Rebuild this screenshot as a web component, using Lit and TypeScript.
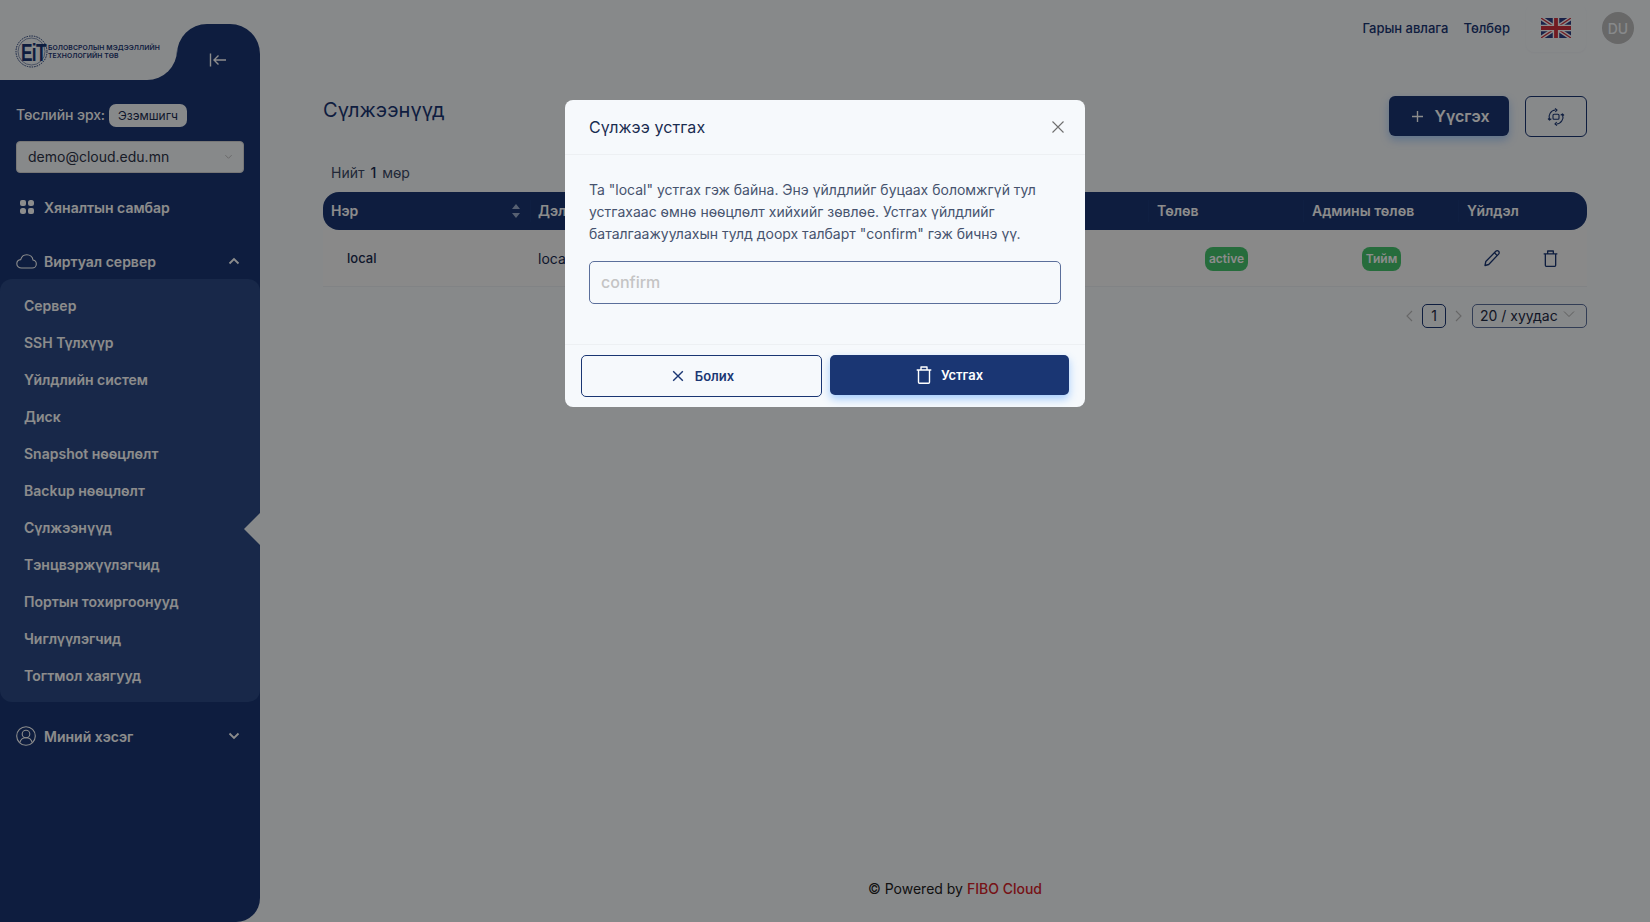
import { LitElement, html, css } from "lit";
import { customElement } from "lit/decorators.js";

const x = (size: number, w = 1.6) => html`<svg width=${size} height=${size} viewBox="0 0 16 16" fill="none" stroke="currentColor" stroke-width=${w}><path d="M2.5 2.500l11 11M13.500 2.500l-11 11"/></svg>`;
const trash = (w: number, h: number) => html`<svg width=${w} height=${h} viewBox="0 0 16 18" fill="none" stroke="currentColor" stroke-width="1.4" stroke-linejoin="round"><path d="M.7 4h14.600M5 4V1h6v3M2.500 4v12.200c0 .6.4 1.100 1 1.100h9c.6 0 1-.5 1-1.100V4"/></svg>`;

const items = ["Сервер", "SSH Түлхүүр", "Үйлдлийн систем", "Диск", "Snapshot нөөцлөлт", "Backup нөөцлөлт", "Сүлжээнүүд", "Тэнцвэржүүлэгчид", "Портын тохиргоонууд", "Чиглүүлэгчид", "Тогтмол хаягууд"];

@customElement("app-root")
export class AppRoot extends LitElement {
  static styles = css`
    :host { display: block; font-family: Inter, "Noto Sans", sans-serif; color: #1a3673; }
    * { box-sizing: border-box; }
    .page { position: relative; display: flex; height: 922px; overflow: hidden; background: #f6f9fc; }
    .side { width: 260px; flex: none; display: flex; flex-direction: column; }
    .top { display: flex; height: 80px; flex: none; }
    .brandwrap { width: 177px; background: linear-gradient(to bottom, transparent 50px, #1a3673 50px); }
    .brand { height: 80px; background: #f6f9fc; border-bottom-right-radius: 30px; display: flex; align-items: center; gap: 0; padding: 22px 0 0 15px; }
    .logo { position: relative; width: 33px; height: 33px; flex: none; }
    .logo svg { display: block; }
    .logo span { position: absolute; left: 6px; top: 1px; font: 800 24px/33px "Liberation Sans", sans-serif; letter-spacing: -1px; color: #1a3673; transform: scaleX(.72); transform-origin: left center; }
    .brandtext { font: 600 6.800px/8px Inter, sans-serif; color: #1a3673; white-space: nowrap; letter-spacing: .1px; padding-top: 2px; }
    .tab { width: 83px; margin-top: 24px; background: #1a3673; border-radius: 30px 30px 0 0; color: #fff; display: flex; align-items: center; justify-content: center; padding: 16px 2px 0 0; }
    .sbody { flex: 1; background: #1a3673; border-bottom-right-radius: 24px; color: #fff; display: flex; flex-direction: column; }
    .role { display: flex; align-items: center; gap: 4px; padding: 22px 16px 0; font-size: 14px; font-weight: 500; height: 46px; letter-spacing: -.1px; }
    .badge { background: #f6f9fc; color: #1a2c50; font-size: 12px; font-weight: 400; line-height: 23px; height: 23px; padding: 0 9px; border-radius: 7px; letter-spacing: 0; margin: 2px 0 0; }
    .sel { margin: 15px 16px 0; height: 32px; background: #f6f9fc; border-radius: 4px; border: 1px solid #d9d9d9; color: #2c3347; font-size: 14px; padding: 0 11px 2px; display: flex; align-items: center; justify-content: space-between; }
    .sel svg { color: #bbb; margin-right: -1px; }
    .nav { display: flex; align-items: center; font-size: 14px; font-weight: 600; color: #fff; padding-left: 16px; padding-right: 20px; height: 24px; }
    .nav .ic { width: 28px; display: flex; flex: none; }
    .nav .ch { margin-left: auto; }
    .n1 { margin-top: 22px; }
    .n2 { margin-top: 30px; }
    .n3 { margin-top: 22px; }
    .sub { margin-top: 6px; height: 423px; background: #2c4a85; border-radius: 12px; display: flex; flex-direction: column; padding: 8px 0 0 24px; position: relative; }
    .sub div { height: 37px; line-height: 37px; font-size: 14px; font-weight: 600; color: #fff; }
    .notch { position: absolute; right: 0; top: 234px; width: 0; height: 0; border-style: solid; border-width: 16px 16px 16px 0; border-color: transparent #f6f9fc transparent transparent; }
    .main { flex: 1; display: flex; flex-direction: column; min-width: 0; padding: 0 63px; position: relative; }
    .hdr { height: 56px; display: flex; align-items: center; justify-content: flex-end; font-size: 13px; font-weight: 500; color: #1a3673; margin-right: -63px; padding-right: 16px; }
    .hdr .l1 { margin-right: 15px; }
    .flagbox { width: 60px; margin: 0 16px 0 16px; display: flex; justify-content: center; height: 48px; align-items: center; border-radius: 8px; box-shadow: 0 1px 2px rgba(0,0,0,.03); }
    .avatar { width: 32px; height: 32px; border-radius: 50%; background: #bdbdbd; color: #f6f9fc; font-size: 14px; display: flex; align-items: center; justify-content: center; }
    .titlerow { display: flex; align-items: flex-start; margin-top: 40px; height: 41px; }
    h1 { margin: 0; flex: 1; font-size: 20px; font-weight: 400; line-height: 28px; color: #1a3673; letter-spacing: .05px; }
    .create { width: 120px; height: 40px; background: #1a3673; color: #fff; border-radius: 6px; display: flex; align-items: center; justify-content: center; gap: 11px; padding-left: 4px; font-size: 16px; font-weight: 600; box-shadow: 0 4px 8px rgba(64,150,255,.4); }
    .refresh { width: 62px; height: 41px; margin-left: 16px; border: 1px solid #1a3673; border-radius: 6px; display: flex; align-items: center; justify-content: center; color: #1a3673; }
    .total { margin: 26px 0 0 8px; height: 29px; font-size: 14px; line-height: 20px; color: #3c4a66; }
    .total b { font-weight: 500; color: #1a2c50; margin: 0 2px; }
    .grid { display: grid; grid-template-columns: 207px 618px 155px 155px 129px; }
    .thead { height: 38px; background: #1a3673; border-radius: 16px; color: #fff; font-size: 14px; font-weight: 600; align-items: center; }
    .thead > div { height: 22px; line-height: 22px; padding-left: 8px; border-left: 1px solid #1c3a78; display: flex; align-items: center; justify-content: space-between; }
    .thead > div:first-child { border-left: 0; padding-right: 9px; }
    .thead > div:nth-child(2) { padding-left: 7px; }
    .trow { height: 57px; background: #fafafa; border-bottom: 1px solid #ebeef3; align-items: center; font-size: 13px; color: #1a2c50; }
    .trow .nm { padding-left: 24px; font-weight: 500; }
    .trow .dt { padding-left: 8px; font-size: 14px; }
    .center { display: flex; justify-content: center; padding: 1px 0 0 2px; }
    .pill { background: #45c56e; color: #fff; font-size: 12px; font-weight: 600; line-height: 24px; height: 24px; padding: 0 4px; border-radius: 8px; }
    .acts { display: flex; color: #1a3673; padding-left: 25px; gap: 42px; align-items: center; }
    .pager { display: flex; justify-content: flex-end; align-items: center; margin-top: 17px; font-size: 14px; color: #1f2a44; height: 24px; }
    .pg { width: 24px; height: 24px; border: 1px solid #1a3673; border-radius: 5px; text-align: center; line-height: 22px; margin: 0 8px; }
    .arrow { color: #bbb; display: flex; }
    .size { margin-left: 9px; width: 115px; height: 24px; border: 1px solid #5b6f9b; border-radius: 5px; padding: 0 11px 2px 7px; display: flex; align-items: center; justify-content: space-between; }
    .size svg { color: #aaa; margin-bottom: 2px; }
    .foot { margin-top: auto; padding-bottom: 23px; text-align: center; font-size: 14px; line-height: 20px; color: #222; }
    .foot span { color: #d8232a; font-weight: 500; }
    .overlay { position: absolute; inset: 0; background: rgba(0,0,0,.45); }
    .modal { position: absolute; left: 565px; top: 100px; width: 520px; height: 307px; background: #f6f9fc; border-radius: 8px; display: flex; flex-direction: column; color: #1a2c50; }
    .mh { height: 55px; flex: none; display: flex; align-items: center; justify-content: space-between; padding: 0 19px 0 24px; border-bottom: 1px solid #edf0f3; font-size: 16px; font-weight: 400; color: #1a2c50; letter-spacing: .1px; }
    .mh svg { color: #6f6f6f; }
    .mb { flex: 1; padding: 24px 24px 0; font-size: 14px; line-height: 22px; color: #46536e; }
    .mb p { margin: 0; white-space: nowrap; }
    .inp { margin-top: 16px; height: 43px; border: 1px solid #5b6f9b; border-radius: 5px; padding: 0 11px; line-height: 41px; font-size: 16px; font-weight: 500; color: #c4c4c4; }
    .mf { height: 63px; flex: none; border-top: 1px solid #edf0f3; display: flex; padding: 10px 16px 0; gap: 8px; align-items: flex-start; }
    .btn { display: flex; align-items: center; justify-content: center; font-size: 13px; border-radius: 5px; font-weight: 600; }
    .cancel { width: 241px; height: 42px; border: 1px solid #1a3673; color: #1a3673; gap: 10px; padding-left: 2px; }
    .del { width: 239px; height: 40px; background: #1a3673; color: #fff; gap: 9px; padding-bottom: 1px; box-shadow: 0 4px 8px rgba(64,150,255,.45); }
  `;

  render() {
    return html`
      <div class="page">
        <aside class="side">
          <div class="top">
            <div class="brandwrap"><div class="brand">
              <div class="logo">
                <svg width="33" height="33" viewBox="0 0 33 33" fill="none" stroke="#1a3673"><circle cx="16.500" cy="16.500" r="15.500" stroke-dasharray="1.500 1" stroke-width="1"/><circle cx="16.500" cy="16.500" r="13.500" stroke-width=".5"/></svg>
                <span>EiT</span>
              </div>
              <div class="brandtext">БОЛОВСРОЛЫН МЭДЭЭЛЛИЙН<br/>ТЕХНОЛОГИЙН ТӨВ</div>
            </div></div>
            <div class="tab">
              <svg width="18" height="14" viewBox="0 0 18 14" fill="none" stroke="currentColor" stroke-width="1.400"><path d="M1.500 .5v13M17 7H5M9.500 2.500L5 7l4.500 4.500"/></svg>
            </div>
          </div>
          <div class="sbody">
            <div class="role">Төслийн эрх: <span class="badge">Эзэмшигч</span></div>
            <div class="sel">demo@cloud.edu.mn
              <svg width="9" height="9" viewBox="0 0 10 10" fill="none" stroke="currentColor" stroke-width="1"><path d="M1.500 3.500L5 7l3.500-3.500"/></svg>
            </div>
            <div class="nav n1"><span class="ic">
              <svg width="16" height="16" viewBox="0 0 16 16" fill="currentColor" style="margin-left:3px"><rect x="1" y="1" width="6" height="6" rx="2"/><rect x="9" y="1" width="6" height="6" rx="2.500"/><rect x="1" y="9" width="6" height="6" rx="2.500"/><rect x="9" y="9" width="6" height="6" rx="2"/></svg>
            </span>Хяналтын самбар</div>
            <div class="nav n2"><span class="ic">
              <svg width="21" height="15" viewBox="0 0 21 15" fill="none" stroke="currentColor" stroke-width="1.100"><path d="M5.500 14C3 14 .8 12.300.8 9.800c0-2.200 1.700-4 3.900-4.200C5.500 2.800 7.900.8 10.800.8c3.200 0 5.800 2.200 6.200 5.200 1.900.3 3.300 1.900 3.300 3.900 0 2.300-1.800 4.100-4.100 4.100z"/></svg>
            </span>Виртуал сервер
              <svg class="ch" width="12" height="8" viewBox="0 0 12 8" fill="none" stroke="currentColor" stroke-width="1.800"><path d="M1.500 6.500L6 2l4.500 4.500"/></svg>
            </div>
            <div class="sub">
              ${items.map((i) => html`<div>${i}</div>`)}
              <span class="notch"></span>
            </div>
            <div class="nav n3"><span class="ic">
              <svg width="20" height="20" viewBox="0 0 20 20" fill="none" stroke="currentColor" stroke-width="1.100"><circle cx="10" cy="10" r="9.300"/><circle cx="10" cy="8" r="3.800"/><path d="M3.800 16.500c.8-3 3.200-4.800 6.200-4.800s5.400 1.800 6.200 4.800"/></svg>
            </span>Миний хэсэг
              <svg class="ch" width="12" height="8" viewBox="0 0 12 8" fill="none" stroke="currentColor" stroke-width="1.800"><path d="M1.500 1.500L6 6l4.500-4.500"/></svg>
            </div>
          </div>
        </aside>
        <main class="main">
          <div class="hdr">
            <span class="l1">Гарын авлага</span><span>Төлбөр</span>
            <div class="flagbox">
              <svg width="30" height="20" viewBox="0 0 30 20">
                <rect width="30" height="20" fill="#2f3f86"/>
                <path d="M0 0L30 20M30 0L0 20" stroke="#fff" stroke-width="4"/>
                <path d="M0 0L30 20M30 0L0 20" stroke="#d0323f" stroke-width="1.300"/>
                <path d="M15 0V20M0 10H30" stroke="#fff" stroke-width="6.500"/>
                <path d="M15 0V20M0 10H30" stroke="#d0323f" stroke-width="3.800"/>
              </svg>
            </div>
            <div class="avatar">DU</div>
          </div>
          <div class="titlerow">
            <h1>Сүлжээнүүд</h1>
            <div class="create">
              <svg width="11" height="11" viewBox="0 0 12 12" stroke="currentColor" stroke-width="1.500"><path d="M6 0v12M0 6h12"/></svg>
              Үүсгэх
            </div>
            <div class="refresh">
              <svg width="18" height="18" viewBox="0 0 18 18" fill="none" stroke="currentColor" stroke-width="1.100"><rect x="6" y="6.300" width="6" height="5" rx="1"/><path d="M2.500 11.500a7 7 0 0 1 6-9.500M15.500 6.500a7 7 0 0 1-6 9.500"/><path d="M8 .5l2 1.600L8.300 4M10 17.500L8 15.900l1.700-1.900"/><path d="M1 10.500l1.500 1.500 1.800-1.300M17 7.500l-1.500-1.500-1.800 1.300"/></svg>
            </div>
          </div>
          <div class="total">Нийт <b>1</b> мөр</div>
          <div class="grid thead">
            <div>Нэр
              <svg width="10" height="18" viewBox="0 0 10 18" fill="#9fb0d0"><path d="M5 2l4 5H1zM5 16L1 11h8z"/></svg>
            </div>
            <div>Дэл</div>
            <div>Төлөв</div>
            <div>Админы төлөв</div>
            <div>Үйлдэл</div>
          </div>
          <div class="grid trow">
            <div class="nm">local</div>
            <div class="dt">local</div>
            <div class="center"><span class="pill">active</span></div>
            <div class="center"><span class="pill">Тийм</span></div>
            <div class="acts">
              <svg width="18" height="18" viewBox="0 0 18 18" fill="none" stroke="currentColor" stroke-width="1.300" stroke-linejoin="round"><path d="M2 16.500l.8-4L12.800 2.300c.8-.8 2-.8 2.800 0s.8 2 0 2.800L5.700 15.500z"/><path d="M11.500 3.800l2.800 2.800"/></svg>
              ${trash(15, 17)}
            </div>
          </div>
          <div class="pager">
            <span class="arrow"><svg width="9" height="12" viewBox="0 0 9 12" fill="none" stroke="currentColor" stroke-width="1.100"><path d="M7 1L2 6l5 5"/></svg></span>
            <span class="pg">1</span>
            <span class="arrow"><svg width="9" height="12" viewBox="0 0 9 12" fill="none" stroke="currentColor" stroke-width="1.100"><path d="M2 1l5 5-5 5"/></svg></span>
            <div class="size">20 / хуудас
              <svg width="12" height="8" viewBox="0 0 12 8" fill="none" stroke="currentColor" stroke-width="1"><path d="M1 1.500l5 5 5-5"/></svg>
            </div>
          </div>
          <div class="foot">© Powered by <span>FIBO Cloud</span></div>
        </main>
        <div class="overlay"></div>
        <div class="modal">
          <div class="mh">Сүлжээ устгах ${x(16, 1.100)}</div>
          <div class="mb">
            <p>Та "local" устгах гэж байна. Энэ үйлдлийг буцаах боломжгүй тул<br/>устгахаас өмнө нөөцлөлт хийхийг зөвлөе. Устгах үйлдлийг<br/>баталгаажуулахын тулд доорх талбарт "confirm" гэж бичнэ үү.</p>
            <div class="inp">confirm</div>
          </div>
          <div class="mf">
            <div class="btn cancel">${x(14)}Болих</div>
            <div class="btn del">${trash(16, 18)}Устгах</div>
          </div>
        </div>
      </div>
    `;
  }
}
